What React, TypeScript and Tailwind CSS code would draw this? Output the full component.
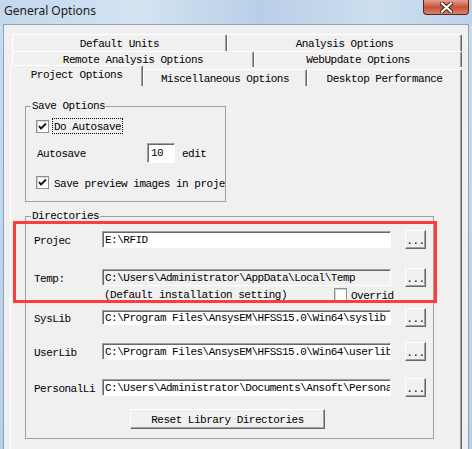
import React from 'react';

const mono = "font-['Liberation_Mono',monospace] text-[11px] tracking-[-0.5px] leading-[12px] text-black";

const Tab: React.FC<{ label: string; w: string; h?: string; selected?: boolean }> = ({ label, w, h = 'h-[17px]', selected }) => (
  <div
    className={`${w} ${h} shrink-0 flex justify-center bg-[#f0f0f0] border-t border-l border-white rounded-tl-[2px] rounded-tr-[2px] shadow-[inset_-1px_0_0_#a0a0a0] border-r border-r-[#696969] ${
      selected ? 'items-start pt-[3px] relative z-10' : 'items-center pt-[1px]'
    }`}
  >
    <span className={`${mono} whitespace-nowrap`}>{label}</span>
  </div>
);

const Check: React.FC<{ checked?: boolean }> = ({ checked }) => (
  <div className="w-[13px] h-[13px] shrink-0 bg-white border border-[#8e8f8f] shadow-[inset_1px_1px_0_#d6d6d6] flex items-center justify-center">
    {checked && (
      <svg width="9" height="9" viewBox="0 0 9 9">
        <path d="M1 4 L3 6.5 L8 1.5" stroke="#1c1c1c" strokeWidth="2" fill="none" />
      </svg>
    )}
  </div>
);

const Field: React.FC<{ value: string; disabled?: boolean; h?: string }> = ({ value, disabled, h = 'h-[17px]' }) => (
  <div
    className={`w-[289px] ${h} shrink-0 overflow-hidden whitespace-nowrap border-t border-l border-t-[#a0a0a0] border-l-[#a0a0a0] border-b border-r border-b-white border-r-white shadow-[inset_1px_1px_0_#696969] pl-[2px] flex items-center ${
      disabled ? 'bg-[#f0f0f0]' : 'bg-white'
    }`}
  >
    <span className={mono}>{value}</span>
  </div>
);

const Dots: React.FC<{ disabled?: boolean; h?: string }> = ({ disabled, h = 'h-[19px]' }) => (
  <div
    className={`w-[21px] ${h} shrink-0 ml-[14px] bg-[#f0f0f0] border-t border-l border-white border-r border-b border-r-[#696969] border-b-[#696969] shadow-[inset_-1px_-1px_0_#a0a0a0] flex items-center justify-center`}
  >
    <span className={`${mono} ${disabled ? 'text-[#a0a0a0]' : ''} pt-[3px]`}>...</span>
  </div>
);

const DirRow: React.FC<{ label: string; value: string; mt: string; disabled?: boolean; h?: string; inputH?: string }> = ({
  label,
  value,
  mt,
  disabled,
  h = 'h-[19px]',
  inputH,
}) => (
  <div className={`flex items-center ${h} ${mt}`}>
    <div className={`${mono} w-[68px] ml-[8px] pt-[3px] whitespace-nowrap`}>{label}</div>
    <Field value={value} disabled={disabled} h={inputH} />
    <Dots disabled={disabled} />
  </div>
);

export default function App() {
  return (
    <div className="relative w-[472px] h-[449px] overflow-hidden bg-gradient-to-b from-[#c9dcef] to-[#b7cfe8]">
      {/* title bar */}
      <div className="h-[24px] flex items-center pl-[4px] pb-[2px] bg-[linear-gradient(90deg,#c4d8ed_0%,#d3e3f2_30%,#b9cfe6_55%,#cddff0_80%,#bcd2ea_100%)]">
        <span className="font-['Noto_Sans',sans-serif] text-[12px] text-[#1a1a1a]">General Options</span>
      </div>
      {/* close button */}
      <div className="absolute top-0 right-[3px] w-[46px] h-[15px] rounded-b-[4px] border border-t-0 border-[#5c2219] bg-gradient-to-b from-[#e5a08e] via-[#c8523a] to-[#d9806a] flex items-center justify-center">
        <svg width="13" height="11" viewBox="0 0 13 11">
          <path d="M2 1.5 L11 9.5 M11 1.5 L2 9.5" stroke="#3a1a16" strokeWidth="4" strokeLinecap="square" />
          <path d="M2 1.5 L11 9.5 M11 1.5 L2 9.5" stroke="#ffffff" strokeWidth="2.2" strokeLinecap="square" />
        </svg>
      </div>

      {/* client area */}
      <div className="ml-[3px] w-[466px] h-[425px] bg-[#f0f0f0] border-t border-l border-r border-[#8da2ba] pt-[9px] pl-[6px]">
        {/* tab rows */}
        <div className="flex ml-[2px]">
          <Tab label="Default Units" w="w-[215px]" />
          <Tab label="Analysis Options" w="w-[235px]" />
        </div>
        <div className="flex ml-[2px]">
          <Tab label="Remote Analysis Options" w="w-[242px]" h="h-[16px]" />
          <Tab label="WebUpdate Options" w="w-[208px]" h="h-[16px]" />
        </div>
        <div className="flex items-end -mt-[2px]">
          <Tab label="Project Options" w="w-[133px]" h="h-[21px]" selected />
          <Tab label="Miscellaneous Options" w="w-[164px]" h="h-[17px]" />
          <Tab label="Desktop Performance" w="w-[155px]" h="h-[17px]" />
        </div>

        {/* panel */}
        <div className="-mt-[1px] w-[452px] h-[400px] border-t border-l border-white border-r border-r-[#696969] shadow-[inset_-1px_0_0_#a0a0a0] pt-[14px] pl-[14px]">
          <fieldset className="w-[201px] border border-[#a0a0a0] pb-[11px]">
            <legend className={`${mono} ml-[5px] px-[1px]`}>Save Options</legend>
            <div className="flex items-center h-[16px] mt-[6px] ml-[10px]">
              <Check checked />
              <span className={`${mono} ml-[3px] px-[1px] pt-[2px] h-[16px] border border-dotted border-black`}>Do Autosave</span>
            </div>
            <div className="flex items-center h-[20px] mt-[9px] ml-[11px]">
              <span className={`${mono} w-[110px] pt-[2px]`}>Autosave</span>
              <div className="w-[28px] h-[20px] bg-white border-t border-l border-t-[#a0a0a0] border-l-[#a0a0a0] border-b border-r border-b-white border-r-white shadow-[inset_1px_1px_0_#696969] pl-[3px] flex items-center">
                <span className={mono}>10</span>
              </div>
              <span className={`${mono} ml-[7px] pt-[2px]`}>edit</span>
            </div>
            <div className="flex items-center h-[15px] mt-[12px] ml-[10px] whitespace-nowrap">
              <Check checked />
              <span className={`${mono} ml-[5px] pt-[2px]`}>Save preview images in proje</span>
            </div>
          </fieldset>

          <fieldset className="w-[409px] mt-[8px] border border-[#a0a0a0] pb-[9px]">
            <legend className={`${mono} ml-[5px] px-[1px]`}>Directories</legend>
            <DirRow label="Projec" value="E:\RFID" mt="mt-[8px]" />
            <DirRow label="Temp:" value="C:\Users\Administrator\AppData\Local\Temp" mt="mt-[19px]" disabled />
            <div className="flex items-center h-[14px] ml-[78px]">
              <span className={`${mono} w-[230px] pt-[2px] whitespace-nowrap`}>(Default installation setting)</span>
              <Check />
              <span className={`${mono} ml-[4px] pt-[3px]`}>
                <span className="underline">O</span>verrid
              </span>
            </div>
            <DirRow label="SysLib" value="C:\Program Files\AnsysEM\HFSS15.0\Win64\syslib" mt="mt-[7px]" inputH="h-[15px]" />
            <DirRow label="UserLib" value="C:\Program Files\AnsysEM\HFSS15.0\Win64\userlib" mt="mt-[15px]" />
            <DirRow label="PersonalLi" value="C:\Users\Administrator\Documents\Ansoft\Persona" mt="mt-[17px]" />
            <div className="flex justify-center mt-[12px] pr-[4px]">
              <div className="w-[195px] h-[20px] bg-[#f0f0f0] border-t border-l border-white border-r border-b border-r-[#696969] border-b-[#696969] shadow-[inset_-1px_-1px_0_#a0a0a0] flex items-center justify-center">
                <span className={`${mono} pt-[2px]`}>Reset Library Directories</span>
              </div>
            </div>
          </fieldset>
        </div>
      </div>

      {/* red annotation box */}
      <div className="absolute left-[13px] top-[221px] w-[424px] h-[82px] border-[3px] border-[#ff3b3b]" />
    </div>
  );
}
